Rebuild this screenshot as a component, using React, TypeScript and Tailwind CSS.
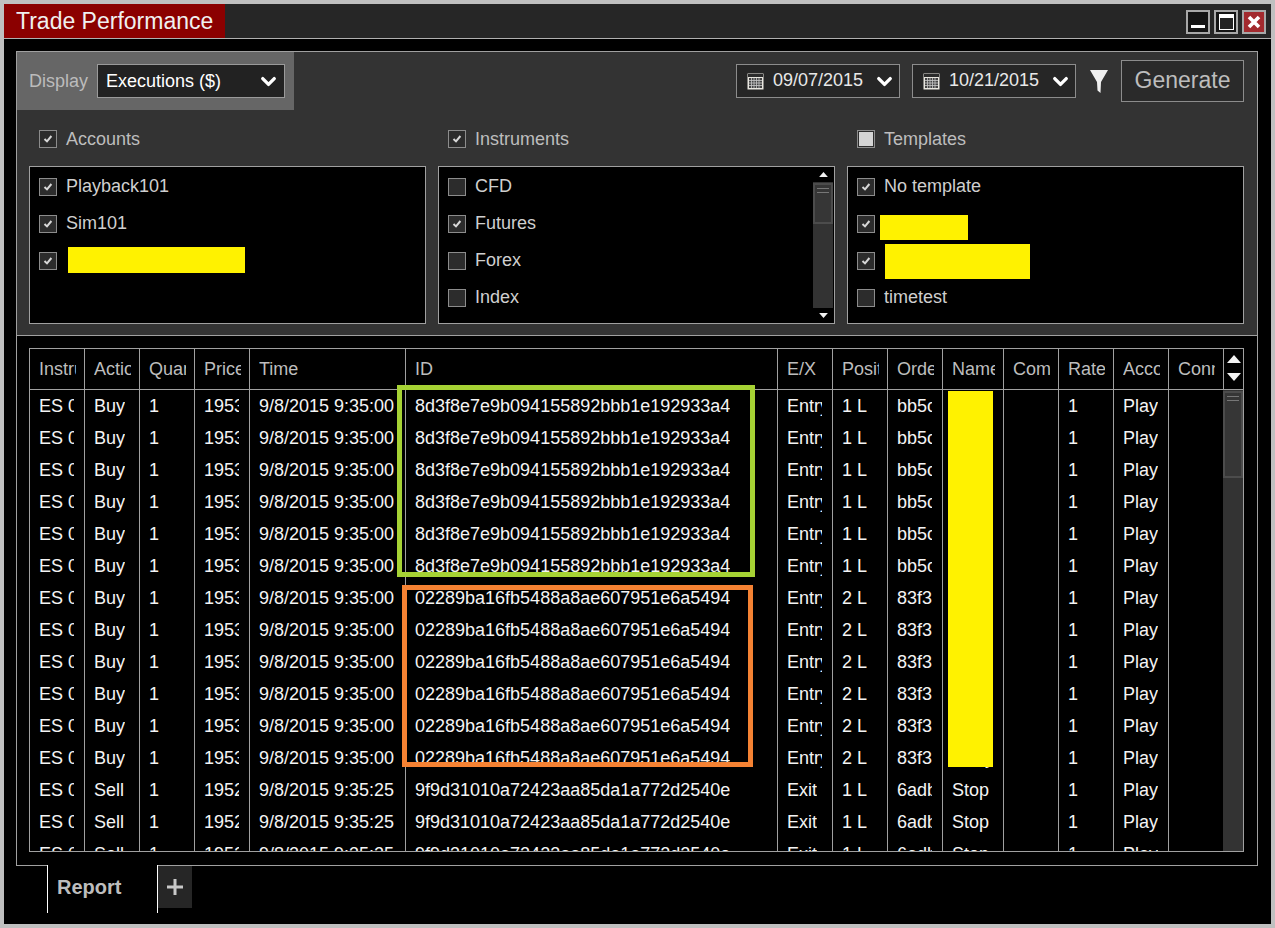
import { ChevronDown } from "lucide-react";

type Column = { title: string; width: string; last?: boolean };

const columns: Column[] = [
  { title: "Instrument", width: "w-[55px]" },
  { title: "Action", width: "w-[55px]" },
  { title: "Quantity", width: "w-[55px]" },
  { title: "Price", width: "w-[55px]" },
  { title: "Time", width: "w-[156px]" },
  { title: "ID", width: "w-[372px]" },
  { title: "E/X", width: "w-[55px]" },
  { title: "Position", width: "w-[55px]" },
  { title: "Order", width: "w-[55px]" },
  { title: "Name", width: "w-[61px]" },
  { title: "Com", width: "w-[55px]" },
  { title: "Rate", width: "w-[55px]" },
  { title: "Account", width: "w-[55px]" },
  { title: "Connection", width: "w-[54px]", last: true },
];

const buyA = ["ES 09-15", "Buy", "1", "1953.00", "9/8/2015 9:35:00", "8d3f8e7e9b094155892bbb1e192933a4", "Entry", "1 L", "bb5c0e1", "Entry", "", "1", "Playback101", ""];
const buyB = ["ES 09-15", "Buy", "1", "1953.00", "9/8/2015 9:35:00", "02289ba16fb5488a8ae607951e6a5494", "Entry", "2 L", "83f3 1a", "Entry", "", "1", "Playback101", ""];
const sell = ["ES 09-15", "Sell", "1", "1952.00", "9/8/2015 9:35:25", "9f9d31010a72423aa85da1a772d2540e", "Exit", "1 L", "6adb4f0", "Stop", "", "1", "Playback101", ""];

const rows = [buyA, buyA, buyA, buyA, buyA, buyA, buyB, buyB, buyB, buyB, buyB, buyB, sell, sell, sell];

function CheckBox({ state = "on" }: { state?: "on" | "off" | "mixed" }) {
  return (
    <span className="flex h-[18px] w-[18px] shrink-0 items-center justify-center border border-[#8c8c8c] bg-[#2c2c2c]">
      {state === "on" ? (
        <svg width="12" height="12" viewBox="0 0 12 12">
          <path d="M2.5 6 5 8.4 9.4 3" fill="none" stroke="#d8d8d8" strokeWidth="2" />
        </svg>
      ) : null}
      {state === "mixed" ? <span className="h-[14px] w-[14px] bg-[#d4d4d4]" /> : null}
    </span>
  );
}

function CheckRow({ label, state, redact }: { label: string; state?: "on" | "off"; redact?: string }) {
  return (
    <div className="relative flex h-[37px] items-center gap-[9px] pl-[9px] text-[18px] text-[#cfcfcf]">
      <CheckBox state={state} />
      <span>{label}</span>
      {redact ? <span className={`absolute bg-[#fff200] ${redact}`} /> : null}
    </div>
  );
}

function GroupHead({ label, state }: { label: string; state?: "on" | "mixed" }) {
  return (
    <div className="flex h-[18px] items-center gap-[9px] pl-[10px] text-[18px] text-[#bdbdbd]">
      <CheckBox state={state} />
      <span>{label}</span>
    </div>
  );
}

function Arrow({ down, width = 14, height = 8 }: { down?: boolean; width?: number; height?: number }) {
  return (
    <svg width={width} height={height} viewBox="0 0 14 8">
      <path d={down ? "M0 0H14L7 8Z" : "M0 8H14L7 0Z"} fill="#f2f2f2" />
    </svg>
  );
}

function Thumb({ className }: { className: string }) {
  return (
    <div className={`flex flex-col gap-[3px] border-2 border-[#4c4c4c] bg-[#363636] px-[2px] pt-[3px] ${className}`}>
      <span className="h-px bg-[#777]" />
      <span className="h-px bg-[#777]" />
    </div>
  );
}

function CalendarIcon() {
  return (
    <svg width="17" height="17" viewBox="0 0 17 17" className="shrink-0">
      <rect x="0.5" y="0.5" width="16" height="16" fill="#e8e6df" />
      <rect x="1" y="1" width="15" height="3" fill="#2b2b2b" />
      <rect x="2" y="5" width="13" height="10" fill="#444" />
      <path d="M2 7.5H15M2 10H15M2 12.5H15M4.5 5V15M7 5V15M9.5 5V15M12 5V15" stroke="#c8c8c8" strokeWidth="0.8" />
    </svg>
  );
}

function DateBox({ value }: { value: string }) {
  return (
    <div className="flex h-[34px] w-[164px] items-center border border-[#8c8c8c] bg-[#262626] pl-[10px] pr-[3px] text-[18px] text-[#e8e8e8]">
      <CalendarIcon />
      <span className="ml-[9px] -mt-[2px]">{value}</span>
      <ChevronDown className="ml-auto text-white" size={23} strokeWidth={3.5} />
    </div>
  );
}

function WindowButtons() {
  return (
    <div className="mr-[5px] flex items-center gap-[4px]">
      <div className="flex h-[24px] w-[24px] items-end justify-center border-2 border-[#a8a8a8] bg-[#141414] pb-[4px]">
        <span className="h-[3px] w-[14px] bg-white" />
      </div>
      <div className="flex h-[24px] w-[24px] items-center justify-center border-2 border-[#a8a8a8] bg-[#141414]">
        <span className="h-[16px] w-[15px] border border-white border-t-[4px] bg-[#222]" />
      </div>
      <div className="flex h-[24px] w-[24px] items-center justify-center border-2 border-[#a8a8a8] bg-[#a32a2e]">
        <svg width="14" height="14" viewBox="0 0 14 14">
          <path d="M2 2 12 12M12 2 2 12" stroke="#fff" strokeWidth="3.6" />
        </svg>
      </div>
    </div>
  );
}

function TopPanel() {
  return (
    <div className="h-[284px] shrink-0 border-b border-[#a0a0a0] bg-[#333333]">
      <div className="flex h-[58px] items-start justify-between">
        <div className="flex h-[58px] w-[277px] items-center bg-[#666666] pl-[12px]">
          <span className="text-[18px] text-[#bcbcbc]">Display</span>
          <div className="ml-[9px] flex h-[34px] w-[188px] items-center justify-between border border-[#9a9a9a] bg-[#222222] pl-[8px] pr-[4px] text-[18px] text-white">
            <span>Executions ($)</span>
            <ChevronDown size={23} strokeWidth={3.5} />
          </div>
        </div>
        <div className="flex items-center pr-[13px] pt-[8px]">
          <DateBox value="09/07/2015" />
          <div className="ml-[12px]">
            <DateBox value="10/21/2015" />
          </div>
          <svg width="18" height="23" viewBox="0 0 18 23" className="ml-[14px] mr-[2px]">
            <path d="M0 0H18L11 12 10.5 23 7.5 20.5 7 12Z" fill="#f0f0f0" />
          </svg>
          <div className="ml-[11px] flex h-[42px] w-[123px] items-center justify-center border border-[#8c8c8c] bg-[#2a2a2a] pb-[2px] text-[23px] text-[#bdbdbd]">
            Generate
          </div>
        </div>
      </div>

      <div className="mt-[20px] grid grid-cols-3 gap-x-[12px] pl-[12px] pr-[13px]">
        <GroupHead label="Accounts" />
        <GroupHead label="Instruments" />
        <GroupHead label="Templates" state="mixed" />
      </div>

      <div className="mt-[18px] grid grid-cols-3 gap-x-[12px] pl-[12px] pr-[13px]">
        <div className="h-[158px] border border-[#a0a0a0] bg-black pt-px">
          <CheckRow label="Playback101" />
          <CheckRow label="Sim101" />
          <CheckRow label="" redact="left-[38px] top-[5px] h-[26px] w-[177px]" />
        </div>
        <div className="flex h-[158px] border border-[#a0a0a0] bg-black pt-px">
          <div className="flex-1">
            <CheckRow label="CFD" state="off" />
            <CheckRow label="Futures" />
            <CheckRow label="Forex" state="off" />
            <CheckRow label="Index" state="off" />
          </div>
          <div className="mr-px flex w-[20px] flex-col bg-[#333333] -mt-px">
            <div className="flex h-[15px] items-center justify-center bg-black">
              <Arrow width={9} height={5} />
            </div>
            <Thumb className="mt-px h-[41px]" />
            <div className="mt-auto flex h-[15px] items-center justify-center bg-black">
              <Arrow down width={9} height={5} />
            </div>
          </div>
        </div>
        <div className="h-[158px] border border-[#a0a0a0] bg-black pt-px">
          <CheckRow label="No template" />
          <CheckRow label="" redact="left-[32px] top-[10px] h-[25px] w-[88px]" />
          <CheckRow label="" redact="left-[37px] top-[2px] h-[35px] w-[145px]" />
          <CheckRow label="timetest" state="off" />
        </div>
      </div>
    </div>
  );
}

function Table() {
  return (
    <div className="relative ml-[12px] mt-[12px] h-[504px] w-[1215px] border border-[#a0a0a0] bg-black">
      <div className="flex h-[41px] border-b border-[#a0a0a0] text-[18px] text-[#bdbdbd]">
        {columns.map((col) => (
          <div key={col.title} className={`${col.width} flex shrink-0 items-center pl-[9px] pr-[8px] ${col.last ? "" : "border-r border-[#a0a0a0]"}`}>
            <span className="overflow-hidden whitespace-nowrap">{col.title}</span>
          </div>
        ))}
        <div className="flex w-[20px] flex-col items-center gap-[10px] border-l border-[#a0a0a0] pt-[6px]">
          <Arrow />
          <Arrow down />
        </div>
      </div>

      <div className="flex h-[461px] overflow-hidden">
        <div className="w-[1193px] shrink-0">
          {rows.map((row, r) => (
            <div key={r} className="flex h-[32px] text-[18px] text-[#f4f4f4]">
              {row.map((cell, c) => (
                <div key={c} className={`${columns[c].width} flex shrink-0 items-center pl-[9px] pr-[10px] ${columns[c].last ? "" : "border-r border-[#a0a0a0]"}`}>
                  <span className="overflow-hidden whitespace-nowrap">{cell}</span>
                </div>
              ))}
            </div>
          ))}
        </div>
        <div className="h-[461px] w-[20px] bg-[#333333] pt-px">
          <Thumb className="h-[87px]" />
        </div>
      </div>

      <div className="absolute left-[918px] top-[42px] h-[376px] w-[45px] bg-[#fff200]" />
      <div className="absolute left-[367px] top-[36px] h-[192px] w-[358px] border-[5px] border-[#a6d234]" />
      <div className="absolute left-[372px] top-[236px] h-[182px] w-[351px] border-[5px] border-[#f58233]" />
    </div>
  );
}

export default function App() {
  return (
    <div className="h-[928px] w-[1275px] overflow-hidden bg-[#c0c0c0] p-[4px] font-['Liberation_Sans',Arial,sans-serif]">
      <div className="flex h-[920px] w-[1267px] flex-col bg-black">
        <div className="flex h-[35px] shrink-0 items-start justify-between border-b border-[#b0b0b0] bg-[#262626]">
          <div className="flex h-[34px] w-[221px] items-center bg-[#8b0000] pl-[12px] text-[23px] text-[#f0f0f0]">
            Trade Performance
          </div>
          <div className="pt-[6px]">
            <WindowButtons />
          </div>
        </div>

        <div className="mx-[12px] mt-[12px] flex h-[815px] w-[1242px] shrink-0 flex-col border border-[#a0a0a0]">
          <TopPanel />
          <Table />
        </div>

        <div className="flex items-start pl-[43px]">
          <div className="-mt-px flex h-[48px] w-[111px] items-center border-x border-white bg-black pb-[4px] pl-[9px] text-[20px] font-bold text-[#bdbdbd]">
            Report
          </div>
          <div className="flex h-[42px] w-[34px] items-center justify-center bg-[#262626]">
            <svg width="16" height="16" viewBox="0 0 16 16">
              <path d="M8 0V16M0 8H16" stroke="#c8c8c8" strokeWidth="3" />
            </svg>
          </div>
        </div>
      </div>
    </div>
  );
}
